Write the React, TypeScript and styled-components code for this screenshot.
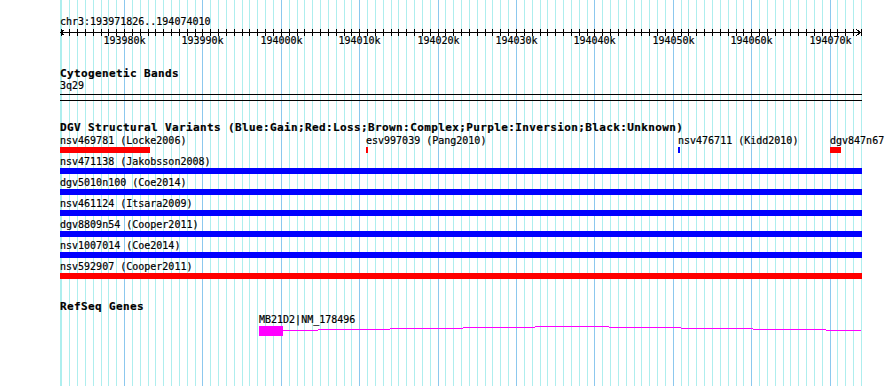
import styled, { createGlobalStyle } from "styled-components";

const START = 193971826;
const END = 194074010;
const TRACK_LEFT = 60;
const TRACK_WIDTH = 801;

// genome position -> x inside the track area
const toX = (pos: number) => ((pos - START) * TRACK_WIDTH) / (END - START);

type Kind = "gain" | "loss";

interface Variant {
  name: string;
  study?: string;
  start: number;
  end: number;
  kind: Kind;
}

const dgvRows: Variant[][] = [
  [
    { name: "nsv469781", study: "Locke2006", start: 193960000, end: 193983300, kind: "loss" },
    { name: "esv997039", study: "Pang2010", start: 194010863, end: 194011118, kind: "loss" },
    { name: "nsv476711", study: "Kidd2010", start: 194050664, end: 194050919, kind: "gain" },
    { name: "dgv847n67", start: 194070055, end: 194071458, kind: "loss" },
  ],
  [{ name: "nsv471138", study: "Jakobsson2008", start: 193900000, end: 194200000, kind: "gain" }],
  [{ name: "dgv5010n100", study: "Coe2014", start: 193900000, end: 194200000, kind: "gain" }],
  [{ name: "nsv461124", study: "Itsara2009", start: 193900000, end: 194200000, kind: "gain" }],
  [{ name: "dgv8809n54", study: "Cooper2011", start: 193900000, end: 194200000, kind: "gain" }],
  [{ name: "nsv1007014", study: "Coe2014", start: 193900000, end: 194200000, kind: "gain" }],
  [{ name: "nsv592907", study: "Cooper2011", start: 193900000, end: 194200000, kind: "loss" }],
];

const kindColor: Record<Kind, string> = { gain: "#0000ff", loss: "#ff0000" };

const gene = {
  label: "MB21D2|NM_178496",
  exonStart: 193997212,
  exonEnd: 194000274,
  nextExon: 194074010,
};

const kbPositions: number[] = [];
for (let p = Math.ceil(START / 1000) * 1000; p <= END; p += 1000) kbPositions.push(p);

const GlobalStyle = createGlobalStyle`
  body {
    margin: 0;
    background: #ffffff;
  }
`;

const Panel = styled.div`
  position: relative;
  width: 890px;
  height: 386px;
  overflow: hidden;
  background: #ffffff;
  color: #000;
  font-family: "DejaVu Sans Mono", "Liberation Mono", monospace;
  font-size: 10px;
  line-height: 12px;
  -webkit-text-stroke: 0.2px #000;
`;

const GridLayer = styled.svg`
  position: absolute;
  top: 0;
  left: 0;
  z-index: 0;
`;

const Tracks = styled.div`
  position: relative;
  z-index: 1;
  width: 802px;
  margin-left: ${TRACK_LEFT}px;
  display: flex;
  flex-direction: column;
`;

const RulerTrack = styled.section`
  box-sizing: border-box;
  height: 46px;
  padding-top: 16px;
`;

const TextLine = styled.div`
  height: 12px;
  white-space: nowrap;
`;

const Scale = styled.div`
  position: relative;
  height: 18px;
`;

const ScaleSvg = styled.svg`
  position: absolute;
  top: 0;
  left: 0;
  overflow: visible;
`;

const TickLabel = styled.span`
  position: absolute;
  top: 6.5px;
  transform: translateX(-50%);
  white-space: nowrap;
`;

const Track = styled.section<{ $gap: number }>`
  margin-top: ${(p) => p.$gap}px;
  display: flex;
  flex-direction: column;
`;

const TrackTitle = styled.div`
  height: 12px;
  font-size: 11px;
  font-weight: bold;
  letter-spacing: 0.38px;
  white-space: nowrap;
`;

const Rule = styled.div<{ $gap: number }>`
  height: 1px;
  margin-top: ${(p) => p.$gap}px;
  background: #000;
`;

const VariantRows = styled.div`
  margin-top: 1px;
  display: flex;
  flex-direction: column;
  gap: 3px;
`;

const FeatureRow = styled.div<{ $height: number }>`
  position: relative;
  height: ${(p) => p.$height}px;
`;

const Feature = styled.div`
  position: absolute;
  top: 0;
  display: flex;
  flex-direction: column;
  align-items: flex-start;
`;

const FeatureLabel = styled.span`
  height: 12px;
  white-space: nowrap;
`;

const VariantBar = styled.div<{ $color: string }>`
  align-self: stretch;
  min-width: 2px;
  height: 6px;
  background: ${(p) => p.$color};
`;

const ExonBox = styled.div`
  align-self: stretch;
  height: 10px;
  background: #ff00ff;
`;

const IntronSvg = styled.svg`
  position: absolute;
  top: 0;
`;

function Grid() {
  const lines = kbPositions.map((p) => {
    const x = Math.round(TRACK_LEFT + toX(p)) + 0.5;
    const major = p % 10000 === 0;
    return (
      <line key={p} x1={x} x2={x} y1={0} y2={386} stroke={major ? "#8cc8ee" : "#aeeeee"} strokeWidth={1} />
    );
  });
  return (
    <GridLayer width={890} height={386} shapeRendering="crispEdges">
      <line x1={60.5} x2={60.5} y1={0} y2={386} stroke="#aeeeee" />
      {lines}
    </GridLayer>
  );
}

function Ruler() {
  const majors = kbPositions.filter((p) => p % 10000 === 0);
  return (
    <RulerTrack>
      <TextLine>chr3:193971826..194074010</TextLine>
      <Scale>
        <ScaleSvg width={802} height={8} shapeRendering="crispEdges">
          <line x1={0} x2={801} y1={4.5} y2={4.5} stroke="#000" />
          {kbPositions.map((p) => {
            const x = Math.round(toX(p)) + 0.5;
            return <line key={p} x1={x} x2={x} y1={1} y2={8} stroke="#000" />;
          })}
          <path d="M4.5 1.5 L0.5 4.5 L4.5 7.5" fill="none" stroke="#000" />
          <path d="M796.5 1.5 L800.5 4.5 L796.5 7.5" fill="none" stroke="#000" />
        </ScaleSvg>
        {majors.map((p) => (
          <TickLabel key={p} style={{ left: Math.round(toX(p)) + 0.5 }}>
            {p / 1000}k
          </TickLabel>
        ))}
      </Scale>
    </RulerTrack>
  );
}

function VariantFeature({ v }: { v: Variant }) {
  const x1 = Math.max(0, toX(v.start));
  const x2 = Math.min(802, toX(v.end));
  return (
    <Feature style={{ left: Math.round(x1), width: Math.max(2, Math.round(x2 - x1)) }}>
      <FeatureLabel>{v.study ? `${v.name} (${v.study})` : v.name}</FeatureLabel>
      <VariantBar $color={kindColor[v.kind]} />
    </Feature>
  );
}

function GeneTrack() {
  const x1 = Math.round(toX(gene.exonStart));
  const x2 = Math.round(toX(gene.exonEnd));
  const x3 = Math.round(toX(gene.nextExon));
  const w = x3 - x2;
  return (
    <FeatureRow $height={22} style={{ marginTop: 1 }}>
      <Feature style={{ left: x1, width: x2 - x1 }}>
        <FeatureLabel>{gene.label}</FeatureLabel>
        <ExonBox />
      </Feature>
      <IntronSvg style={{ left: x2 }} width={w} height={22} shapeRendering="crispEdges">
        <polyline
          points={`0,16.5 ${w / 2},12.5 ${w},16.5`}
          fill="none"
          stroke="#ff00ff"
          strokeWidth={1}
        />
      </IntronSvg>
    </FeatureRow>
  );
}

export default function App() {
  return (
    <Panel>
      <GlobalStyle />
      <Grid />
      <Tracks>
        <Ruler />
        <Track $gap={22}>
          <TrackTitle>Cytogenetic Bands</TrackTitle>
          <TextLine>3q29</TextLine>
          <Rule $gap={2} />
          <Rule $gap={5} />
        </Track>
        <Track $gap={21}>
          <TrackTitle>
            DGV Structural Variants (Blue:Gain;Red:Loss;Brown:Complex;Purple:Inversion;Black:Unknown)
          </TrackTitle>
          <VariantRows>
            {dgvRows.map((row, i) => (
              <FeatureRow key={i} $height={18}>
                {row.map((v) => (
                  <VariantFeature key={v.name} v={v} />
                ))}
              </FeatureRow>
            ))}
          </VariantRows>
        </Track>
        <Track $gap={22}>
          <TrackTitle>RefSeq Genes</TrackTitle>
          <GeneTrack />
        </Track>
      </Tracks>
    </Panel>
  );
}
